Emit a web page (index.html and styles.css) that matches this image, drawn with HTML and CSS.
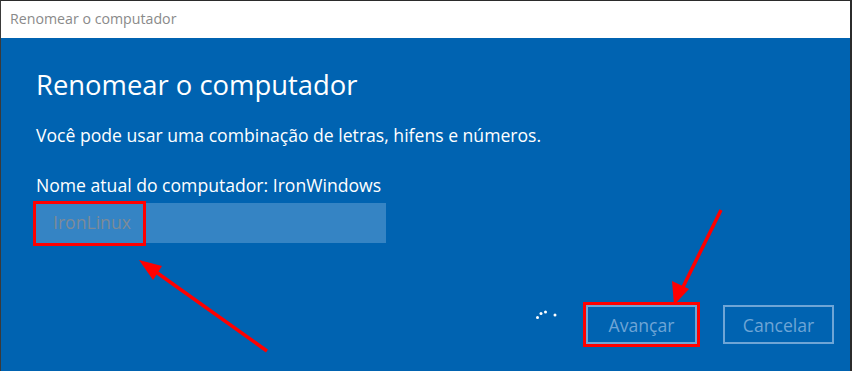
FILE: index.html
```html
<!DOCTYPE html>
<html lang="pt-BR">
<head>
  <meta charset="UTF-8" />
  <title>Renomear o computador</title>
  <link rel="stylesheet" href="styles.css">
</head>
<body>
  <div class="window">
    <div class="titlebar">Renomear o computador</div>
    <div class="dialog">
      <h1>Renomear o computador</h1>
      <p class="hint">Você pode usar uma combinação de letras, hifens e números.</p>
      <p class="current">Nome atual do computador: IronWindows</p>
      <div class="field">
        <span class="value">IronLinux</span>
        <span class="mark mark-field"></span>
      </div>
      <div class="actions">
        <svg class="spinner" width="24" height="14" viewBox="0 0 24 14">
          <circle cx="2.5" cy="10.5" r="1.5" fill="#fff"/>
          <circle cx="6" cy="6.5" r="1.5" fill="#fff"/>
          <circle cx="10.5" cy="5" r="1.5" fill="#fff"/>
          <circle cx="20" cy="8" r="1.5" fill="#fff"/>
        </svg>
        <button class="btn btn-next">Avançar<span class="mark mark-btn"></span></button>
        <button class="btn">Cancelar</button>
      </div>
    </div>
    <svg class="arrows" width="852" height="371" viewBox="0 0 852 371">
      <line x1="267" y1="351" x2="156" y2="272" stroke="#f00" stroke-width="3.5"/>
      <polygon points="139,260 162,266 153,280" fill="#f00"/>
      <line x1="721" y1="210" x2="683" y2="287" stroke="#f00" stroke-width="3.5"/>
      <polygon points="674,305 672,281 689,289" fill="#f00"/>
    </svg>
  </div>
</body>
</html>
```

FILE: styles.css
```css
* {
  margin: 0;
  padding: 0;
  box-sizing: border-box;
}
html, body {
  width: 852px;
  height: 371px;
  overflow: hidden;
  background: #2b2b2b;
  font-family: 'Open Sans', 'Noto Sans', sans-serif;
}
.window {
  position: relative;
  width: 852px;
  height: 371px;
  border-top: 1px solid #2b2b2b;
  border-left: 1px solid #3a3a3a;
  border-right: 2px solid #2b2b2b;
  display: flex;
  flex-direction: column;
}
.titlebar {
  height: 37px;
  background: #fff;
  color: #8a8a8a;
  font-size: 14.2px;
  line-height: 20px;
  padding: 8px 0 0 9px;
}
.dialog {
  flex-grow: 1;
  background: #0063b1;
  color: #fff;
  padding: 29px 0 0 35px;
  display: flex;
  flex-direction: column;
}
.dialog h1 {
  font-weight: 400;
  font-size: 27.4px;
  line-height: 36px;
}
.hint,
.current {
  font-size: 17.6px;
  line-height: 24px;
}
.hint {
  margin-top: 20px;
}
.current {
  margin-top: 26px;
}
.field {
  position: relative;
  width: 350px;
  height: 40px;
  margin-top: 6px;
  background: #3584c4;
  padding: 7px 0 0 17px;
}
.field .value {
  font-size: 17.6px;
  line-height: 24px;
  color: #7d8b98;
}
.mark {
  position: absolute;
  border: 3px solid #f00;
}
.mark-field {
  left: -3px;
  top: -2px;
  width: 113px;
  height: 45px;
}
.actions {
  display: flex;
  align-items: center;
  margin-top: 62px;
  padding-right: 16px;
  justify-content: flex-end;
}
.spinner {
  align-self: flex-start;
  margin-top: 2px;
  margin-right: 27px;
}
.btn {
  position: relative;
  width: 111px;
  height: 39px;
  background: transparent;
  border: 2px solid #6ea5d6;
  color: #6ea5d6;
  font-family: inherit;
  font-size: 17.6px;
}
.btn-next {
  margin-right: 26px;
}
.mark-btn {
  left: -5px;
  top: -5px;
  width: 117px;
  height: 45px;
}
.arrows {
  position: absolute;
  left: -1px;
  top: -1px;
  pointer-events: none;
}
```
